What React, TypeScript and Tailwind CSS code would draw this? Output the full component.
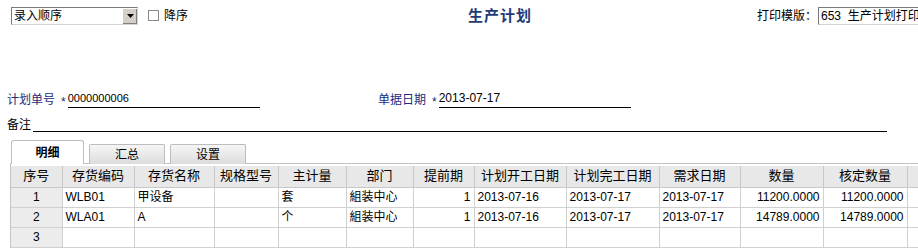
import React from 'react';

const cols = [
  { title: '序号', w: 51 },
  { title: '存货编码', w: 72 },
  { title: '存货名称', w: 80 },
  { title: '规格型号', w: 64 },
  { title: '主计量', w: 68 },
  { title: '部门', w: 67 },
  { title: '提前期', w: 61 },
  { title: '计划开工日期', w: 92 },
  { title: '计划完工日期', w: 93 },
  { title: '需求日期', w: 81 },
  { title: '数量', w: 83 },
  { title: '核定数量', w: 84 },
  { title: '', w: 60 },
];

const rows = [
  ['1', 'WLB01', '甲设备', '', '套', '組装中心', '1', '2013-07-16', '2013-07-17', '2013-07-17', '11200.0000', '11200.0000', ''],
  ['2', 'WLA01', 'A', '', '个', '組装中心', '1', '2013-07-16', '2013-07-17', '2013-07-17', '14789.0000', '14789.0000', ''],
  ['3', '', '', '', '', '', '', '', '', '', '', '', ''],
];

const rightCols = [6, 10, 11];

export default function App() {
  return (
    <div
      className="w-[918px] h-[250px] overflow-hidden bg-white text-[12px] leading-[14px] text-black"
      style={{ fontFamily: '"Liberation Sans", "Noto Sans CJK SC", sans-serif' }}
    >
      {/* top bar */}
      <div className="flex items-center h-[31px]">
        <div className="flex items-center w-[468px] pl-[11px]">
          <div className="flex items-center w-[127px] h-[18px] border border-[#7a7a7a] border-r-[#d4d4d4] border-b-[#d4d4d4]">
            <span className="flex-1 pl-[2px]">录入顺序</span>
            <span className="flex items-center justify-center w-[15px] h-[16px] bg-[#d4d0c8] border-l border-t border-white shadow-[inset_-1px_-1px_0_#808080]">
              <svg width="7" height="4" viewBox="0 0 7 4"><path d="M0 0h7L3.5 4z" fill="#000" /></svg>
            </span>
          </div>
          <span className="ml-[10px] w-[11px] h-[11px] border border-[#8a8a8a] bg-white" />
          <span className="ml-[5px]">降序</span>
        </div>
        <div className="text-[15px] leading-[18px] font-bold text-[#1f3a75] tracking-[1px]">生产计划</div>
        <div className="ml-auto flex items-center">
          <span>打印模版：</span>
          <div className="w-[100px] h-[18px] ml-[1px] border border-[#7a7a7a] border-r-0 border-b-[#d4d4d4] pl-[2px] leading-[16px] whitespace-nowrap overflow-hidden">
            653&nbsp; 生产计划打印
          </div>
        </div>
      </div>

      {/* header fields */}
      <div className="flex items-end h-[77px] pl-[7px]">
        <div className="flex items-end w-[371px]">
          <span className="text-[#1c2a7a] mb-[1px]">计划单号</span>
          <span className="ml-[6px] mr-[2px] text-[#1c2a7a] mb-[-1px]">*</span>
          <span className="w-[192px] border-b border-black leading-[14px] pb-[2px] text-[11px]">0000000006</span>
        </div>
        <div className="flex items-end">
          <span className="text-[#1c2a7a] mb-[1px]">单据日期</span>
          <span className="ml-[6px] mr-[2px] text-[#1c2a7a] mb-[-1px]">*</span>
          <span className="w-[192px] border-b border-black leading-[14px] pb-[2px]">2013-07-17</span>
        </div>
      </div>
      <div className="flex items-end h-[24px] pl-[7px]">
        <span>备注</span>
        <span className="ml-[2px] w-[854px] h-[14px] border-b border-black" />
      </div>

      {/* tabs */}
      <div className="flex items-end h-[24px] mt-[8px] pl-[11px] gap-[5px] relative z-10 -mb-px">
        <div className="w-[73px] h-[24px] bg-white border border-[#bdbdbd] border-b-0 rounded-t-[3px] flex items-center justify-center font-bold">
          明细
        </div>
        <div className="w-[76px] h-[20px] bg-gradient-to-b from-[#f6f6f6] to-[#dcdcdc] border border-[#bdbdbd] border-b-0 rounded-t-[2px] flex items-center justify-center">
          汇总
        </div>
        <div className="w-[76px] h-[20px] bg-gradient-to-b from-[#f6f6f6] to-[#dcdcdc] border border-[#bdbdbd] border-b-0 rounded-t-[2px] flex items-center justify-center">
          设置
        </div>
      </div>

      {/* detail grid */}
      <div className="ml-[10px] border-t border-l border-[#c4c4c4] pt-[2px]">
        <table className="table-fixed border-collapse w-[956px]">
          <colgroup>
            {cols.map((c, i) => (
              <col key={i} style={{ width: c.w }} />
            ))}
          </colgroup>
          <thead>
            <tr className="h-[21px] bg-[#e8e8e8]">
              {cols.map((c, i) => (
                <th key={i} className="p-0 font-normal text-center border-r border-b border-[#c8c8c8] whitespace-nowrap overflow-hidden text-[13px]">
                  {c.title}
                </th>
              ))}
            </tr>
          </thead>
          <tbody>
            {rows.map((r, ri) => (
              <tr key={ri} className="h-[20px]">
                {r.map((v, ci) => (
                  <td
                    key={ci}
                    className={
                      'border-r border-b border-[#d0d0d0] whitespace-nowrap overflow-hidden px-[3px] ' +
                      (ci === 0 ? 'bg-[#ececec] text-center ' : '') +
                      (rightCols.includes(ci) ? 'text-right ' : '')
                    }
                  >
                    {v}
                  </td>
                ))}
              </tr>
            ))}
          </tbody>
        </table>
      </div>
    </div>
  );
}
